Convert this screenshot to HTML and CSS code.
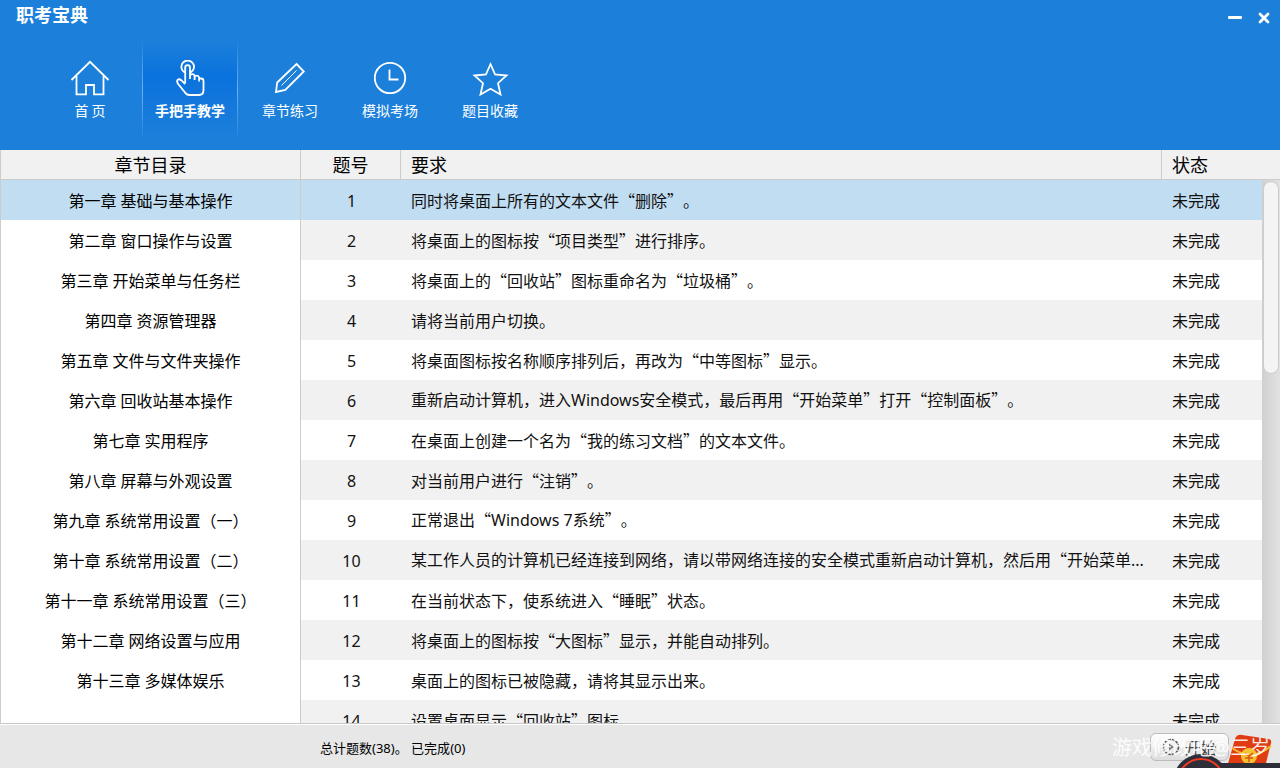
FILE: index.html
```html
<!DOCTYPE html>
<html lang="zh-CN">
<head>
<meta charset="utf-8">
<title>职考宝典</title>
<link rel="stylesheet" href="styles.css">
</head>
<body>
<header class="top">
  <div class="titlebar">
    <h1 class="title">职考宝典</h1>
    <div class="window-buttons">
      <button class="window-button" aria-label="最小化"><svg width="14" height="14" viewBox="0 0 14 14"><rect y="5" width="14" height="3" rx="1" fill="#fff"/></svg></button>
      <button class="window-button" aria-label="关闭"><svg width="12" height="12" viewBox="0 0 12 12"><path d="M2 2l8 8M10 2l-8 8" stroke="#fff" stroke-width="2.8" stroke-linecap="round"/></svg></button>
    </div>
  </div>
  <nav class="nav">
    <a class="nav-item" href="#home">
      <svg class="icon" viewBox="0 0 40 40"><path d="M1.500 20L20 1.800 38.500 20M6.500 16v18.300h9.500V25h8v9.300h9.500V16"/></svg>
      <span>首 页</span>
    </a>
    <a class="nav-item active" href="#teach">
      <svg class="icon" viewBox="0 0 40 40"><path d="M14.500 12.300A6.300 6.300 0 1 1 20.500 12.500M15.200 23V7.500a2.400 2.400 0 0 1 4.800 0V19M20 16.500a2.300 2.300 0 0 1 4.600 0V20M24.600 17.500a2.300 2.300 0 0 1 4.500 0V21.500M29.100 18.500h2q2.400 0 2.400 2.500V30q0 5-4.500 5H19.500q-3 0-4.500-2.500L7.800 23.500C6 20 8.500 18 11.200 20.200L15.200 24"/></svg>
      <span>手把手教学</span>
    </a>
    <a class="nav-item" href="#practice">
      <svg class="icon" viewBox="0 0 40 40"><path d="M26.500 4l7.300 7.500-18.500 18.500-9.300 2 1.200-9.500z"/><path class="thin" d="M26.500 10.500L11.500 25.500"/></svg>
      <span>章节练习</span>
    </a>
    <a class="nav-item" href="#exam">
      <svg class="icon" viewBox="0 0 40 40"><circle cx="20" cy="18" r="15.200"/><path d="M19.500 9.500V19.500H28.500"/></svg>
      <span>模拟考场</span>
    </a>
    <a class="nav-item" href="#favorites">
      <svg class="icon" viewBox="0 0 40 40"><path d="M20.500 4.200l4.600 10.300 11.400 1-8.500 7.700 2.500 11.300-10-5.800-10 5.800 2.500-11.300L4.500 15.500l11.400-1z"/></svg>
      <span>题目收藏</span>
    </a>
  </nav>
</header>
<main class="content">
  <aside class="chapters">
    <h2 class="chapters-head">章节目录</h2>
    <ul class="chapter-list">
      <li><a class="chapter selected" href="#c1">第一章 基础与基本操作</a></li>
      <li><a class="chapter" href="#c2">第二章 窗口操作与设置</a></li>
      <li><a class="chapter" href="#c3">第三章 开始菜单与任务栏</a></li>
      <li><a class="chapter" href="#c4">第四章 资源管理器</a></li>
      <li><a class="chapter" href="#c5">第五章 文件与文件夹操作</a></li>
      <li><a class="chapter" href="#c6">第六章 回收站基本操作</a></li>
      <li><a class="chapter" href="#c7">第七章 实用程序</a></li>
      <li><a class="chapter" href="#c8">第八章 屏幕与外观设置</a></li>
      <li><a class="chapter" href="#c9">第九章 系统常用设置（一）</a></li>
      <li><a class="chapter" href="#c10">第十章 系统常用设置（二）</a></li>
      <li><a class="chapter" href="#c11">第十一章 系统常用设置（三）</a></li>
      <li><a class="chapter" href="#c12">第十二章 网络设置与应用</a></li>
      <li><a class="chapter" href="#c13">第十三章 多媒体娱乐</a></li>
    </ul>
  </aside>
  <section class="questions">
    <table class="question-table">
      <thead>
        <tr><th class="col-no">题号</th><th>要求</th><th class="col-state">状态</th></tr>
      </thead>
      <tbody>
        <tr class="selected"><td class="no">1</td><td>同时将桌面上所有的文本文件“删除”。</td><td>未完成</td></tr>
        <tr><td class="no">2</td><td>将桌面上的图标按“项目类型”进行排序。</td><td>未完成</td></tr>
        <tr><td class="no">3</td><td>将桌面上的“回收站”图标重命名为“垃圾桶”。</td><td>未完成</td></tr>
        <tr><td class="no">4</td><td>请将当前用户切换。</td><td>未完成</td></tr>
        <tr><td class="no">5</td><td>将桌面图标按名称顺序排列后，再改为“中等图标”显示。</td><td>未完成</td></tr>
        <tr><td class="no">6</td><td>重新启动计算机，进入<span class="latin">Windows</span>安全模式，最后再用“开始菜单”打开“控制面板”。</td><td>未完成</td></tr>
        <tr><td class="no">7</td><td>在桌面上创建一个名为“我的练习文档”的文本文件。</td><td>未完成</td></tr>
        <tr><td class="no">8</td><td>对当前用户进行“注销”。</td><td>未完成</td></tr>
        <tr><td class="no">9</td><td>正常退出“<span class="latin">Windows 7</span>系统”。</td><td>未完成</td></tr>
        <tr><td class="no">10</td><td>某工作人员的计算机已经连接到网络，请以带网络连接的安全模式重新启动计算机，然后用“开始菜单<span class="latin">...</span></td><td>未完成</td></tr>
        <tr><td class="no">11</td><td>在当前状态下，使系统进入“睡眠”状态。</td><td>未完成</td></tr>
        <tr><td class="no">12</td><td>将桌面上的图标按“大图标”显示，并能自动排列。</td><td>未完成</td></tr>
        <tr><td class="no">13</td><td>桌面上的图标已被隐藏，请将其显示出来。</td><td>未完成</td></tr>
        <tr><td class="no">14</td><td>设置桌面显示“回收站”图标。</td><td>未完成</td></tr>
      </tbody>
    </table>
    <div class="scrollbar"><div class="thumb"></div></div>
  </section>
</main>
<footer class="status">
  <p class="summary">总计题数<span class="latin">(38)</span>。<span class="latin"> </span>已完成<span class="latin">(0)</span></p>
  <button class="start">
    <svg width="18" height="18" viewBox="0 0 18 18"><circle cx="9" cy="9" r="7.500" fill="none" stroke="#555" stroke-width="1.500" stroke-dasharray="3 1"/><path d="M7 5.500l5 3.500-5 3.500z" fill="#777"/></svg>
    <span>开始</span>
  </button>
  <svg class="widget" width="108" height="40" viewBox="0 0 108 40" aria-hidden="true">
    <path d="M70 7l27 4q3 1 2 4l-6 24H55l8-28q2-5 7-4z" fill="#e03c12"/>
    <path d="M60 20q20 14 39-2" fill="none" stroke="#f5b82e" stroke-width="2"/>
    <circle cx="77" cy="28" r="8" fill="#f7c331"/>
    <path d="M73 25l4 3 4-3M77 28v6M73 30h8" fill="none" stroke="#d9541a" stroke-width="1.500"/>
    <path d="M28 35h80v5H28z" fill="#2e2e38"/>
    <circle cx="29" cy="54" r="28" fill="#2e2e38"/>
    <circle cx="29" cy="54" r="23" fill="none" stroke="#f23a24" stroke-width="2"/>
  </svg>
  <span class="watermark">游戏修改吧<span class="latin">@</span>三岁</span>
</footer>
</body>
</html>
```
FILE: styles.css
```css
* {
  box-sizing: border-box;
}

body {
  margin: 0;
  height: 100vh;
  display: flex;
  flex-direction: column;
  overflow: hidden;
  background: #fff;
  color: #000;
  font: 16px/24px "Noto Sans CJK SC", sans-serif;
  text-spacing-trim: space-all;
}

a {
  color: inherit;
  text-decoration: none;
}

button {
  font: inherit;
  border: 0;
  padding: 0;
  background: none;
}

svg {
  display: block;
}

.latin,
.no,
.chapter-list {
  font-family: "Noto Sans", "Noto Sans CJK SC", sans-serif;
}

.top {
  background: #1c80db;
  color: #fff;
  padding-bottom: 10px;
}

.titlebar {
  display: flex;
  justify-content: space-between;
  height: 40px;
  padding: 2px 10px 0 16px;
}

.title {
  margin: 0;
  font-size: 18px;
  line-height: 24px;
}

.window-buttons {
  display: flex;
  gap: 16px;
  height: 31px;
  align-items: center;
}

.nav {
  display: flex;
  gap: 4px;
  padding-left: 42px;
}

.nav-item {
  width: 96px;
  height: 100px;
  padding-top: 20px;
  display: flex;
  flex-direction: column;
  align-items: center;
  font-size: 14px;
  line-height: 20px;
  border: solid transparent;
  border-width: 0 1px;
}

.nav-item.active {
  font-weight: bold;
  background: linear-gradient(#1c80db, #0a72dd 35%, #1277db 60%, #1c80db);
  border-image: linear-gradient(#1c80db, #6db3f2 50%, #1c80db) 1;
}

.icon {
  width: 40px;
  height: 40px;
  fill: none;
  stroke: #fff;
  stroke-width: 1.800;
}

.thin {
  stroke-width: 1;
}

.content {
  flex: 1;
  min-height: 0;
  display: flex;
  border-bottom: 1px solid #c8c8c8;
}

.chapters {
  width: 301px;
  flex: none;
  border: solid #ccc;
  border-width: 0 1px;
  text-align: center;
}

.chapters-head {
  margin: 0;
  height: 30px;
  background: #f1f1f1;
  border-bottom: 1px solid #ccc;
  font-size: 18px;
  line-height: 28px;
  font-weight: normal;
}

.chapter-list {
  margin: 0;
  padding: 0;
  list-style: none;
}

.chapter {
  display: block;
  line-height: 40px;
  height: 40px;
  padding-top: 1px;
}

.selected {
  background: #c1ddf1;
}

.questions {
  flex: 1;
  min-width: 0;
  overflow: hidden;
  position: relative;
}

.question-table {
  width: 100%;
  table-layout: fixed;
  border-collapse: separate;
  border-spacing: 0;
}

.question-table th {
  height: 30px;
  padding: 0 10px 2px;
  background: #f1f1f1;
  border-bottom: 1px solid #ccc;
  font-size: 18px;
  line-height: 26px;
  font-weight: normal;
  text-align: left;
}

.question-table th + th {
  border-left: 1px solid #ccc;
}

.question-table .col-no {
  width: 99px;
  text-align: center;
}

.col-state {
  width: 119px;
}

.question-table td {
  height: 40px;
  padding: 0 11px 1px;
  white-space: nowrap;
  overflow: hidden;
  color: #111;
}

.question-table .no {
  padding: 2px 0 0 2px;
  text-align: center;
}

.question-table tbody tr:nth-child(even) {
  background: #f1f1f1;
}

.scrollbar {
  position: absolute;
  top: 30px;
  right: 0;
  bottom: 0;
  width: 18px;
  padding: 1px;
  background: linear-gradient(to right, #d0d0d0, #e2e2e2);
}

.thumb {
  height: 193px;
  border: 1px solid #ccc;
  border-radius: 8px;
  background: #f4f4f4;
}

.status {
  position: relative;
  display: flex;
  justify-content: space-between;
  align-items: center;
  height: 44px;
  padding: 0 51px 0 320px;
  background: #e7e7e7;
  border-top: 1px solid #fff;
}

.summary {
  margin: 0;
  padding-top: 2px;
  font-size: 13px;
}

.start {
  display: flex;
  align-items: center;
  justify-content: center;
  gap: 4px;
  width: 79px;
  height: 28px;
  border: 1px solid #bbb;
  border-radius: 6px;
  background: linear-gradient(#fff, #ddd);
  color: #444;
}

.widget {
  position: absolute;
  right: 0;
  bottom: 0;
}

.watermark {
  position: absolute;
  right: 10px;
  bottom: 8px;
  font-size: 20px;
  color: rgba(255, 255, 255, 0.88);
}
```
